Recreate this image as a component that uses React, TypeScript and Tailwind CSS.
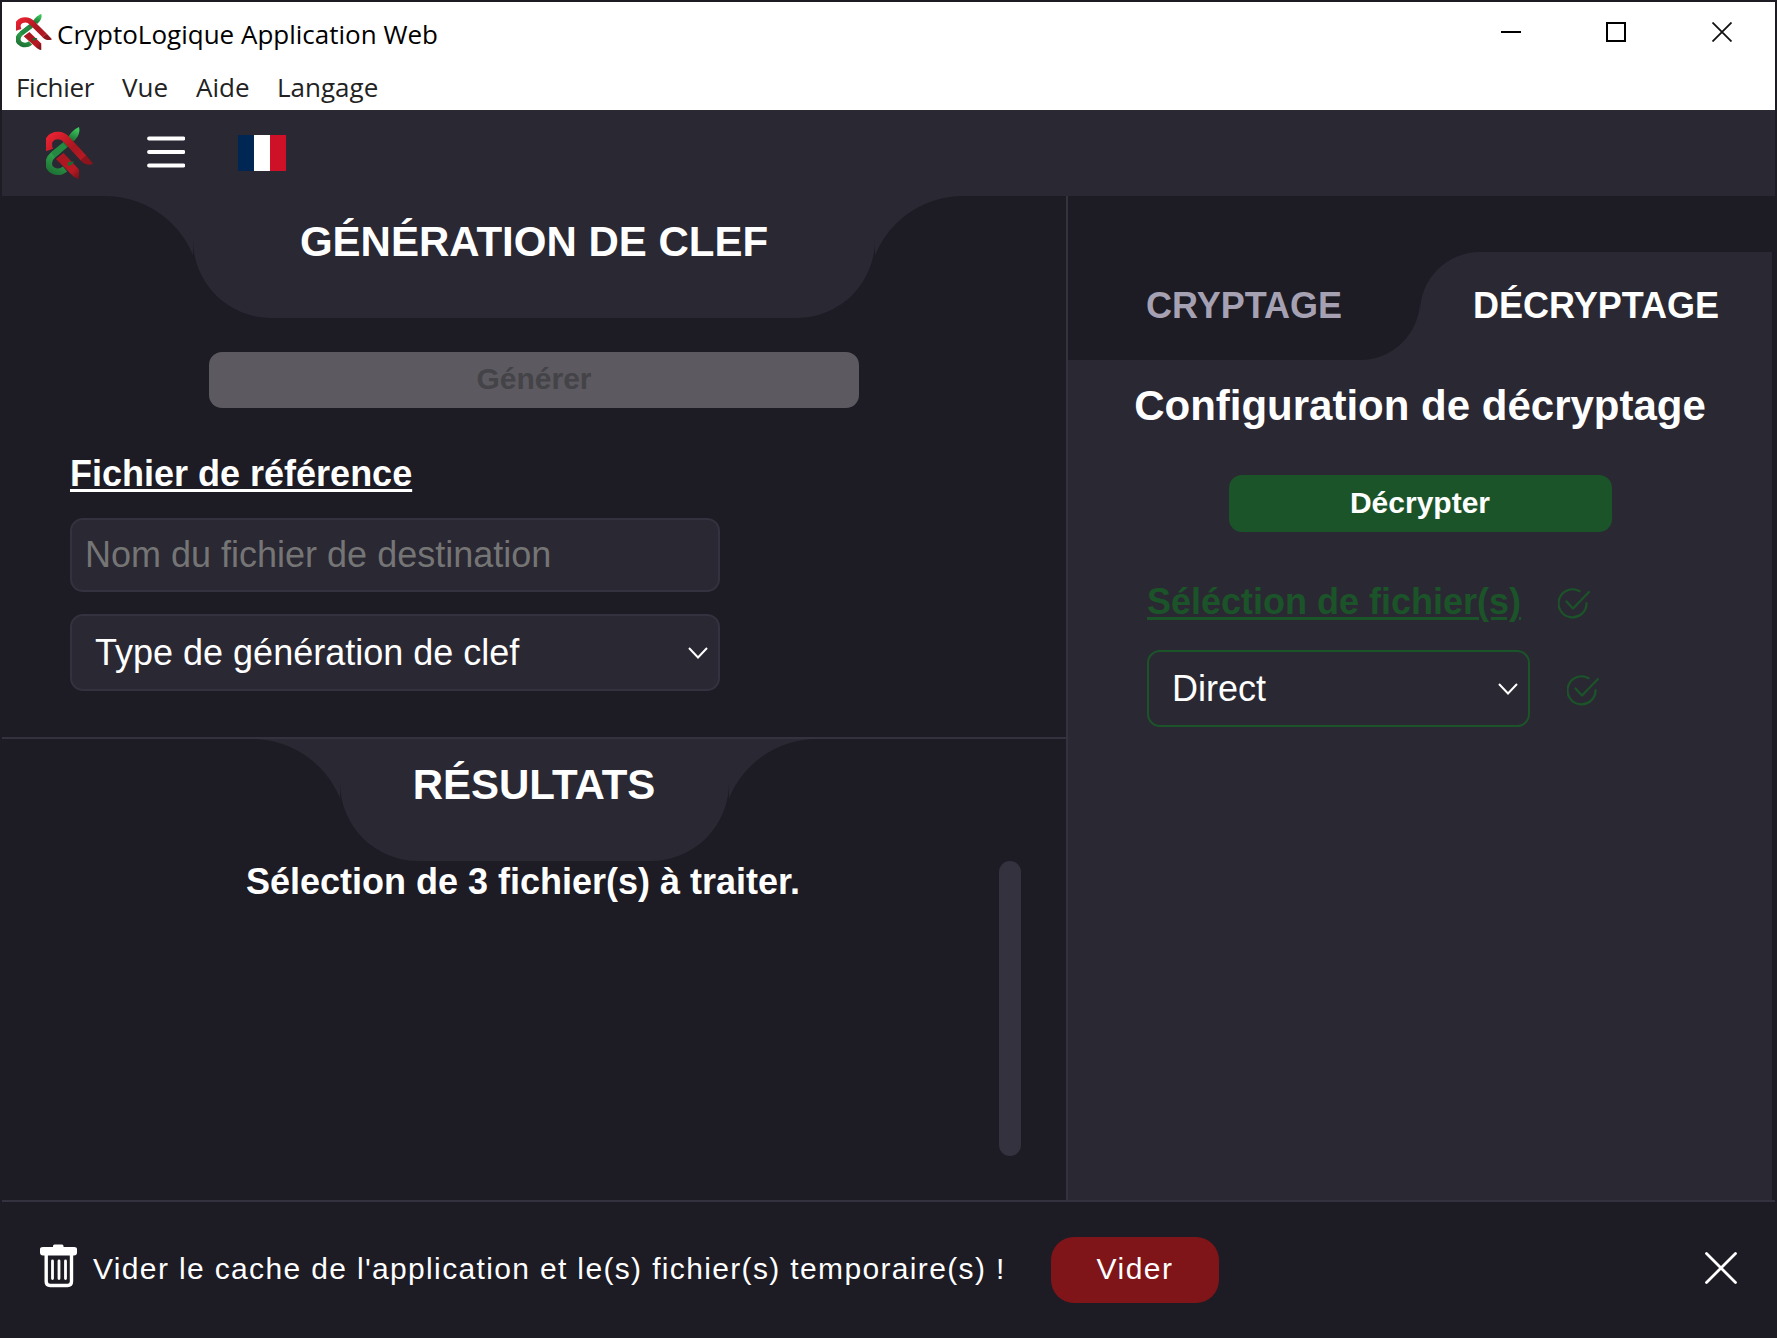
import type { ReactNode } from "react";

function Logo({ id, className }: { id: string; className: string }) {
  return (
    <svg viewBox="0 0 47 52" preserveAspectRatio="none" className={className} fill="none">
      <defs>
        <linearGradient id={`${id}-r`} x1="2" y1="6" x2="40" y2="46" gradientUnits="userSpaceOnUse">
          <stop offset="0" stopColor="#ef2333" />
          <stop offset="0.5" stopColor="#a81720" />
          <stop offset="0.8" stopColor="#b81923" />
          <stop offset="1" stopColor="#6d1116" />
        </linearGradient>
        <linearGradient id={`${id}-g`} x1="30" y1="2" x2="8" y2="46" gradientUnits="userSpaceOnUse">
          <stop offset="0" stopColor="#3cc45c" />
          <stop offset="0.3" stopColor="#14602a" />
          <stop offset="0.65" stopColor="#2fa34c" />
          <stop offset="1" stopColor="#1f7536" />
        </linearGradient>
      </defs>
      <path d="M33 0C28 2 23 7 21 13L28 14C32 10 34.500 5 33 0Z" fill={`url(#${id}-g)`} />
      <path d="M17.500 26L33 42.500V52C30 51.500 28 50 26 48L10 32Z" fill={`url(#${id}-r)`} />
      <path d="M22 35L28 34.500Q26 38.500 22 39Z" fill="#1a6a2f" />
      <path d="M20 17L7 28C1 33 1.500 41 7 43.500C11 45.500 15.500 45 19 42" stroke={`url(#${id}-g)`} strokeWidth="6.500" />
      <path d="M3.500 23C0 14 5 8.500 12 8.500C16 8.500 18.500 10 21 13L37.500 31" stroke={`url(#${id}-r)`} strokeWidth="7.500" />
      <path d="M34.500 33.500L40.200 28.500L47 36.500C43 39 38.500 37.500 34.500 33.500Z" fill="#8c141c" />
      <path d="M19 18L7 28" stroke="#258a41" strokeWidth="6" />
    </svg>
  );
}

function Chevron() {
  return (
    <svg viewBox="0 0 20 12" className="h-3 w-5 shrink-0" fill="none" stroke="#fff" strokeWidth="2">
      <path d="M1 1L10 10.500L19 1" />
    </svg>
  );
}

function CheckCircle({ className }: { className: string }) {
  return (
    <svg viewBox="0 0 33 33" className={className} fill="none" stroke="#1c5429" strokeWidth="2.200" strokeLinecap="round">
      <path d="M21.500 4.200A14 14 0 1 0 28.500 16" />
      <path d="M8.500 14.500L15 21.500L31 5" strokeLinejoin="round" />
    </svg>
  );
}

function Trash() {
  return (
    <svg viewBox="0 0 37 44" className="h-11 w-[37px] shrink-0" fill="none">
      <path d="M13 3V2Q13 0.500 14.500 0.500H22Q23.500 0.500 23.500 2V3H34Q37 3 37 5V8.500Q37 11.500 34 11.500H3Q0 11.500 0 8.500V5Q0 3 3 3Z" fill="#fff" />
      <path d="M6.200 10V37.500Q6.200 41.500 10.200 41.500H27.500Q31.500 41.500 31.500 37.500V10" stroke="#fff" strokeWidth="3.400" />
      <path d="M12.500 17V34.500M19 17V34.500M25.500 17V34.500" stroke="#fff" strokeWidth="2.800" strokeLinecap="round" />
    </svg>
  );
}

function SectionTitle({ width, children }: { width: string; children: ReactNode }) {
  return (
    <div className="flex items-start justify-center">
      <div className="h-[59px] w-[88px] bg-[radial-gradient(circle_at_0_95px,#1d1b24_94.5px,#2a2833_95.5px)]" />
      <h2 className={`flex h-[122px] items-start justify-center rounded-b-[78px] bg-[#2a2833] pt-[19px] text-[42px] font-bold leading-[54px] whitespace-nowrap ${width}`}>
        {children}
      </h2>
      <div className="h-[59px] w-[88px] bg-[radial-gradient(circle_at_88px_95px,#1d1b24_94.5px,#2a2833_95.5px)]" />
    </div>
  );
}

function TitleBar() {
  return (
    <div className="h-[108px] bg-white text-[26px] text-black [font-family:'Open_Sans','Noto_Sans',sans-serif]">
      <div className="flex h-[60px] items-center">
        <Logo id="app" className="ml-[14px] h-9 w-9" />
        <span className="ml-[5px] mt-[5px] whitespace-nowrap">CryptoLogique Application Web</span>
        <div className="ml-auto mr-[43px] flex items-center">
          <div className="h-0.5 w-5 bg-black" />
          <div className="ml-[85px] size-5 border-2 border-black" />
          <svg viewBox="0 0 20 20" className="ml-[86px] size-5" stroke="#111" strokeWidth="1.800">
            <path d="M0.500 0.500L19.500 19.500M19.500 0.500L0.500 19.500" />
          </svg>
        </div>
      </div>
      <div className="flex h-12 items-start pl-[14px] leading-[50px] text-[#222]">
        <span className="w-[106px] tracking-[-0.3px]">Fichier</span>
        <span className="w-[74px]">Vue</span>
        <span className="w-[81px]">Aide</span>
        <span>Langage</span>
      </div>
    </div>
  );
}

function Toolbar() {
  return (
    <div className="flex h-[86px] items-center bg-[#2a2833]">
      <Logo id="bar" className="ml-[44px] h-[52px] w-[47px]" />
      <svg viewBox="0 0 38 32" className="ml-[54px] mb-0.5 h-8 w-[38px]" stroke="#fff" strokeWidth="3.800" strokeLinecap="round">
        <path d="M2 2.500H36.500M2 16H36.500M2 29.500H36.500" />
      </svg>
      <div className="ml-[53px] flex h-9 w-12">
        <div className="w-4 bg-[#002654]" />
        <div className="w-4 bg-white" />
        <div className="w-4 bg-[#ce1126]" />
      </div>
    </div>
  );
}

function KeyPanel() {
  return (
    <section className="h-[543px] border-b-2 border-[#35323f]">
      <SectionTitle width="w-[682px]">GÉNÉRATION DE CLEF</SectionTitle>
      <div className="pl-[68px]">
        <button className="mt-[34px] ml-[139px] block h-14 w-[650px] rounded-[13px] bg-[#5c5a60] pb-0.5 text-[30px] font-bold leading-[54px] text-[#444347]">
          Générer
        </button>
        <h3 className="mt-[44px] text-[36px] font-bold leading-[44px] underline decoration-[3px] underline-offset-[3px] [text-decoration-skip-ink:none]">
          Fichier de référence
        </h3>
        <div className="mt-[22px] flex h-[74px] w-[650px] items-center rounded-[13px] border-2 border-[#35323f] bg-[#2a2833] pl-[13px] text-[36px] text-[#757575]">
          Nom du fichier de destination
        </div>
        <div className="mt-[22px] flex h-[77px] w-[650px] items-center justify-between rounded-[13px] border-2 border-[#35323f] bg-[#2a2833] pl-[23px] pr-[10px] text-[36px]">
          <span>Type de génération de clef</span>
          <Chevron />
        </div>
      </div>
    </section>
  );
}

function ResultsPanel() {
  return (
    <section className="h-[461px]">
      <SectionTitle width="w-[389px]">RÉSULTATS</SectionTitle>
      <div className="flex h-[295px] justify-between pr-[45px]">
        <p className="w-[997px] pl-[45px] text-center text-[36px] font-bold leading-[41px]">
          Sélection de 3 fichier(s) à traiter.
        </p>
        <div className="w-[22px] shrink-0 rounded-[11px] bg-[#35323f]" />
      </div>
    </section>
  );
}

function CryptPanel() {
  return (
    <section className="mr-[3px] flex-1 bg-[#2a2833]">
      <div className="h-14 bg-[#1d1b24]" />
      <div className="flex h-[108px] text-[36px] font-bold leading-[108px]">
        <div className="w-[352px] bg-[#2a2833]">
          <div className="h-[108px] rounded-br-[60px] bg-[#1d1b24] pl-[78px] text-[#a5a1b3]">CRYPTAGE</div>
        </div>
        <div className="flex-1 bg-[#1d1b24]">
          <div className="h-[108px] rounded-tl-[60px] bg-[#2a2833] pl-[53px]">DÉCRYPTAGE</div>
        </div>
      </div>
      <h2 className="mt-[19px] text-center text-[42px] font-bold leading-[54px] whitespace-nowrap">Configuration de décryptage</h2>
      <button className="mx-auto mt-[42px] block h-[57px] w-[383px] rounded-[13px] bg-[#1c5429] pb-0.5 text-[30px] font-bold leading-[55px]">
        Décrypter
      </button>
      <div className="mt-[48px] ml-[79px] flex h-[44px] items-center text-[#1c5429]">
        <h3 className="w-[411px] text-[36px] font-bold leading-[44px] whitespace-nowrap underline decoration-[3px] underline-offset-[3px]">
          Séléction de fichier(s)
        </h3>
        <CheckCircle className="mt-0.5 size-[33px]" />
      </div>
      <div className="mt-[26px] ml-[79px] flex items-center">
        <div className="flex h-[77px] w-[383px] items-center justify-between rounded-[13px] border-2 border-[#1c5429] pl-[23px] pr-[10px] text-[36px]">
          <span>Direct</span>
          <Chevron />
        </div>
        <CheckCircle className="mt-[3px] ml-[37px] size-[33px]" />
      </div>
    </section>
  );
}

function CacheBar() {
  return (
    <footer className="flex h-[136px] items-start border-t-2 border-[#35323f] pl-[38px] text-[30px] leading-[64px] tracking-[1.350px]">
      <div className="mt-[42px]">
        <Trash />
      </div>
      <span className="mt-[35px] ml-4 w-[958px] whitespace-nowrap">
        Vider le cache de l'application et le(s) fichier(s) temporaire(s) !
      </span>
      <button className="mt-[35px] h-[66px] w-[168px] rounded-[23px] bg-[#7f1518] pb-0.5 tracking-[1.500px]">Vider</button>
      <svg viewBox="0 0 32 32" className="mt-[50px] mr-[38px] ml-auto size-8" stroke="#fff" strokeWidth="2.800" strokeLinecap="round">
        <path d="M1.500 1.500L30.500 30.500M30.500 1.500L1.500 30.500" />
      </svg>
    </footer>
  );
}

export default function App() {
  return (
    <div className="h-[1338px] w-[1777px] overflow-hidden bg-[#1d1b24] p-0.5 text-white [font-family:'Liberation_Sans',Arial,sans-serif]">
      <TitleBar />
      <Toolbar />
      <main className="flex h-[1004px]">
        <div className="w-[1066px] shrink-0 border-r-2 border-[#35323f]">
          <KeyPanel />
          <ResultsPanel />
        </div>
        <CryptPanel />
      </main>
      <CacheBar />
    </div>
  );
}
